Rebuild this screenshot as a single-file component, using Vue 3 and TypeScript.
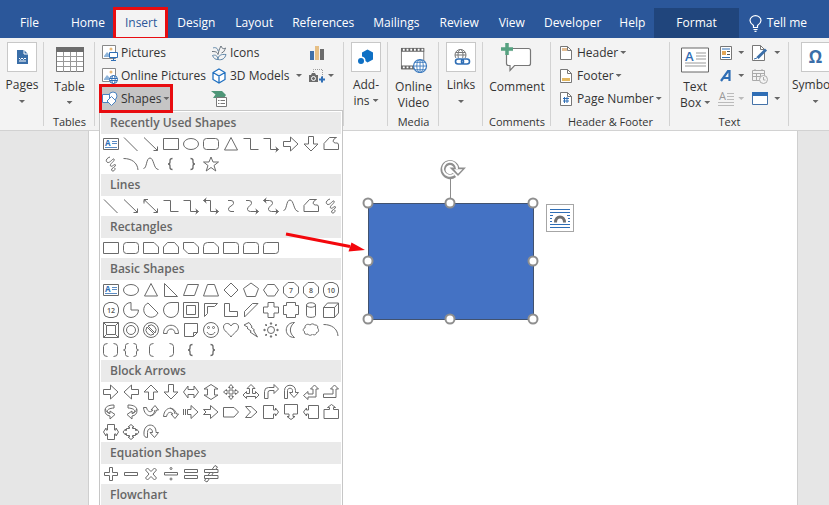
<script setup lang="ts">
interface Shape {
  name: string
  d: string
  text?: string
  box?: boolean
  bold?: boolean
}

interface Section {
  title: string
  shapes: Shape[]
}

const s = (name: string, d: string, extra: Partial<Shape> = {}): Shape => ({ name, d, ...extra })

const headEnd = 'M17.5 15.5l-3-2.5M17.5 15.5l-3 2.5M15.5 14v3'
const headStart = 'M2.5 4.5l3-2.5M2.5 4.5l3 2.5M4.5 3v3'

const textBox = s('Text Box', 'M2.5 4.5h15v11h-15z', { box: true })
const line = s('Line', 'M3 3.5L16.5 17')
const arrow = s('Line Arrow', 'M3 3.5L16.5 16.5M16.5 12.5v4h-4M14.5 16.5l2-2')
const doubleArrow = s('Double Arrow', 'M3 3.5L16.5 16.5M16.5 12.5v4h-4M3 7.5v-4h4M14.5 16.5l2-2M3 5.5l2-2')
const rect = s('Rectangle', 'M2.5 4.5h15v11h-15z')
const oval = s('Oval', 'M2.5 10a7.5 5.5 0 1 0 15 0a7.5 5.5 0 1 0 -15 0z')
const rounded = s('Rounded Rectangle', 'M5.5 4.5h9q3 0 3 3v5q0 3-3 3h-9q-3 0-3-3v-5q0-3 3-3z')
const triangle = s('Triangle', 'M10 3.5L16.5 16H3.5z')
const elbow = s('Elbow', 'M2.5 4.5h7v11h8')
const elbowArrow = s('Elbow Arrow', 'M2.5 4.5h7v11h8' + headEnd)
const elbowDouble = s('Elbow Double Arrow', 'M2.5 4.5h7v11h8' + headEnd + headStart)
const curveConn = s('Curved', 'M7 4.5h3q3 0 2.500 3q-.500 1.500-2.500 2.500q-3 1.500-2.500 3.500q.500 2 2.500 2h3')
const curveArrow = s('Curved Arrow', 'M5 4.500h3q3 0 2.500 3q-.500 1.500-2 2.500q-2.500 1.500-2 3.500q.500 2 3 2h8' + headEnd)
const curveDouble = s('Curved Double Arrow', 'M2.500 4.500h6q3.500 0 3 3q-.500 1.500-2 2.500q-2.500 1.500-2 3.500q.500 2 3 2h7' + headEnd + headStart)
const curve = s('Curve', 'M2.500 14.500C6 14.500 5 4 9 4s3.500 11.500 8.500 11.500')
const freeform = s('Freeform', 'M3 9.500L8.500 3.500h7c-4 1.500-5 6 .500 5.500q1.500 0 1.500 2v4.500H3z')
const scribble = s('Scribble', 'M9 3C5 4 4 8 7 8.500C9 9 12 4 13 5C14.500 7 8 10 9.500 12C11 13.500 14 9 14.500 11C15 13 10 14 10.500 16C11 18 14.500 17 14 14')
const arc = s('Arc', 'M2.500 4.500c8 0 14 4 14.500 11.500')
const leftBrace = s('Left Brace', 'M11.500 4.500q-2.500 0-2.500 2v1.500q0 2-2 2q2 0 2 2v1.500q0 2 2.500 2', { bold: true })
const rightBrace = s('Right Brace', 'M9.500 4.500q2.500 0 2.500 2v1.500q0 2 2 2q-2 0-2 2v1.500q0 2-2.500 2', { bold: true })
const star = s('Star', 'M10 3l2 5h5.500l-4.500 3.500l1.800 5.500l-4.800-3.500l-4.800 3.500l1.800-5.500l-4.500-3.500h5.500z')
const rightArrow = s('Right Arrow', 'M2.500 7.500h7v-4.500l7.500 7l-7.500 7v-4.500h-7z')
const downArrow = s('Down Arrow', 'M7.500 2.500h5v7.500h4.500l-7 7l-7-7h4.500z')

const octagon = 'M7 2.500h6l4.500 4.500v6l-4.500 4.500h-6l-4.500-4.500v-6z'
const dodecagon = 'M8 2.500h4l4 2l1.500 3.500v4l-1.500 4l-4 1.500h-4l-4-1.500l-1.500-4v-4l1.500-3.500z'

const sections: Section[] = [
  {
    title: 'Recently Used Shapes',
    shapes: [
      textBox, line, arrow, rect, oval, rounded, triangle, elbow, elbowArrow, rightArrow, downArrow, freeform,
      scribble, arc, curve, leftBrace, rightBrace, star,
    ],
  },
  {
    title: 'Lines',
    shapes: [line, arrow, doubleArrow, elbow, elbowArrow, elbowDouble, curveConn, curveArrow, curveDouble, curve, freeform, scribble],
  },
  {
    title: 'Rectangles',
    shapes: [
      rect,
      rounded,
      s('Snip Single Corner', 'M2.500 4.500h10.500l4.500 4.500v6.500h-15z'),
      s('Snip Same Side', 'M6.500 4.500h7l4 4.500v6.500h-15v-6.500z'),
      s('Snip Diagonal', 'M2.500 4.500h10.500l4.500 4.500v6.500h-10.500l-4.500-4.500z'),
      s('Snip and Round', 'M6.500 4.500h6.500l4.500 4.500v6.500h-15v-7q0-4 4-4z'),
      s('Round Single Corner', 'M2.500 4.500h12q3 0 3 3v8h-15z'),
      s('Round Same Side', 'M5.500 4.500h9q3 0 3 3v8h-15v-8q0-3 3-3z'),
      s('Round Diagonal', 'M5.500 4.500h12v8q0 3-3 3h-12v-8q0-3 3-3z'),
    ],
  },
  {
    title: 'Basic Shapes',
    shapes: [
      textBox,
      oval,
      triangle,
      s('Right Triangle', 'M3.500 3.500v13h13z'),
      s('Parallelogram', 'M6.500 4.500h11l-4 11h-11z'),
      s('Trapezoid', 'M6.500 4.500h7l4 11.500h-15z'),
      s('Diamond', 'M10 3l7 7l-7 7l-7-7z'),
      s('Pentagon', 'M10 3l7.500 5.500l-3 8h-9l-3-8z'),
      s('Hexagon', 'M6.500 4.500h7l4 5.500l-4 6h-7l-4-6z'),
      s('Heptagon', octagon, { text: '7' }),
      s('Octagon', octagon, { text: '8' }),
      s('Decagon', dodecagon, { text: '10' }),
      s('Dodecagon', dodecagon, { text: '12' }),
      s('Pie', 'M10 2.500a7.500 7.500 0 1 0 7.500 7.500h-7.500z'),
      s('Chord', 'M7 3a7.500 7.500 0 1 0 10 10z'),
      s('Teardrop', 'M17.500 2.500v7.500a7.500 7.500 0 1 1 -7.500-7.500z'),
      s('Frame', 'M2.500 2.500h15v15h-15zM5.500 5.500h9v9h-9z'),
      s('Half Frame', 'M3.500 3.500h13l-3 3h-7v7l-3 3z'),
      s('L-Shape', 'M3.500 3.500h5v8h8v5h-13z'),
      s('Diagonal Stripe', 'M11.500 3.500h5.500l-13.500 13.500v-5.500z'),
      s('Cross', 'M7 2.500h6v4.500h4.500v6h-4.500v4.500h-6v-4.500h-4.500v-6h4.500z'),
      s('Plaque', 'M5.500 2.500h9v3h3v9h-3v3h-9v-3h-3v-9h3z'),
      s('Can', 'M5.500 5c0-3 9-3 9 0v10.500c0 2.500-9 2.500-9 0zM5.500 5c0 3 9 3 9 0'),
      s('Cube', 'M2.500 7.500l4-4.500h11v10l-4 4.500h-11zM2.500 7.500h11v10M13.500 7.500l4-4.500'),
      s('Bevel', 'M2.500 2.500h15v15h-15zM5.500 5.500h9v9h-9zM2.500 2.500l3 3M17.500 2.500l-3 3M2.500 17.500l3-3M17.500 17.500l-3-3'),
      s('Donut', 'M2.500 10a7.500 7.500 0 1 0 15 0a7.500 7.500 0 1 0 -15 0zM5.500 10a4.500 4.500 0 1 0 9 0a4.500 4.500 0 1 0 -9 0z'),
      s('No Symbol', 'M2.500 10a7.500 7.500 0 1 0 15 0a7.500 7.500 0 1 0 -15 0zM7 6l7 7a5 5 0 0 0-7-7zM6 7l7 7a5 5 0 0 1-7-7z'),
      s('Block Arc', 'M2.500 13.500c0-11 15-11 15 0h-3.500c0-6-8-6-8 0z'),
      s('Folded Corner', 'M3.500 3.500h13v9l-4 4h-9zM12.500 16.500v-4h4'),
      s('Smiley Face', 'M2.500 10a7.500 7.500 0 1 0 15 0a7.500 7.500 0 1 0 -15 0zM6 12c1.500 3.500 6.500 3.500 8 0M6.500 7.500a1 1 0 1 0 2 0a1 1 0 1 0-2 0M11.500 7.500a1 1 0 1 0 2 0a1 1 0 1 0-2 0'),
      s('Heart', 'M10 6c2-4 7.500-3 7.500 1c0 4-5 6-7.500 10c-2.500-4-7.500-6-7.500-10c0-4 5.500-5 7.500-1z'),
      s('Lightning Bolt', 'M3 5l5-2.500l3 4l-1 .500l3.500 3l-1 .500l4 6.500l-7.500-5l1.200-.800l-4.200-3l1-.800z'),
      s('Sun', 'M6.500 10a3.500 3.500 0 1 0 7 0a3.500 3.500 0 1 0 -7 0zM9 4l1-1.500l1 1.500zM9 16l1 1.500l1-1.500zM4 9l-1.500 1l1.500 1zM16 9l1.500 1l-1.500 1zM4.500 4.500l1.500.500l-1 1zM15.500 4.500l-.500 1.500l-1-1zM4.500 15.500l.500-1.500l1 1zM15.500 15.500l-1.500-.500l1-1z'),
      s('Moon', 'M13.500 2.500c-11 0-11 15 0 15c-5.500-4-5.500-11 0-15z'),
      s('Cloud', 'M4 8c-.500-3.500 3-4.500 5-3c1.500-1.500 4-1.500 4.500 0c2.500-.500 4 1.500 3 3c2 2 1 4.500-1 4.500c0 2.500-3 3-4 1.500c-1.500 2-4 1.500-4.500 0c-2.500 1-4-.500-3.500-2.500c-2-.500-1.500-3.500.500-3.500z'),
      arc,
      s('Double Bracket', 'M6.500 3.500q-4 0-4 3v7q0 3 4 3M12.500 3.500q4 0 4 3v7q0 3-4 3'),
      s('Double Brace', 'M7.500 3.500q-3 0-3 2v2.500q0 2-2 2q2 0 2 2v2.500q0 2 3 2M12.500 3.500q3 0 3 2v2.500q0 2 2 2q-2 0-2 2v2.500q0 2-3 2'),
      s('Left Bracket', 'M12.500 3.500q-4 0-4 3v7q0 3 4 3'),
      s('Right Bracket', 'M8.500 3.500q4 0 4 3v7q0 3-4 3'),
      leftBrace,
      rightBrace,
    ],
  },
  {
    title: 'Block Arrows',
    shapes: [
      rightArrow,
      s('Left Arrow', 'M17.500 7.500h-7v-4.500l-7.500 7l7.500 7v-4.500h7z'),
      s('Up Arrow', 'M7.500 17.500h5v-7.500h4.500l-7-7l-7 7h4.500z'),
      downArrow,
      s('Left-Right Arrow', 'M2.500 10l4.500-6v3.500h6v-3.500l4.500 6l-4.500 6v-3.500h-6v3.500z'),
      s('Up-Down Arrow', 'M10 2.500l7 4.500h-3.500v6h3.500l-7 4.500l-7-4.500h3.500v-6h-3.500z'),
      s('Quad Arrow', 'M10 2.500l2.500 3h-1.500v3.500h3.500v-1.500l3 2.500l-3 2.500v-1.500h-3.500v3.500h1.500l-2.500 3l-2.500-3h1.500v-3.500h-3.500v1.500l-3-2.500l3-2.500v1.500h3.500v-3.500h-1.500z'),
      s('Left-Right-Up Arrow', 'M10 2.500l4 4h-2.500v5h3v-2l3.500 3.500l-3.500 3.500v-2h-9v2l-3.500-3.500l3.500-3.500v2h3v-5h-2.500z'),
      s('Bent Arrow', 'M3.500 16.500v-7q0-4 4-4h5.500v-3l4.500 4.500l-4.500 4.500v-3h-4q-2 0-2 2v6z'),
      s('U-Turn Arrow', 'M3.500 16.500v-8c0-7 11-7 11 0v2h3l-4.500 5l-4.500-5h3v-2c0-3-5-3-5 0v8z'),
      s('Left-Up Arrow', 'M13.500 3l4 4h-2.500v8h-8v2.500l-4.500-4l4.500-4v2.500h5v-5h-2.500z'),
      s('Bent-Up Arrow', 'M13.500 3l4 4h-2.500v8.500h-12.500v-3.500h9.500v-5h-2.500z'),
      s('Curved Right Arrow', 'M13 3c-6 0-9 2-9 5.500s2 5 5 5.500v3l5-4.500l-5-3.500v2.500c-4-1.500-4-5 4-5.500zM4.500 7c0 2 2 4 4.500 4.500'),
      s('Curved Left Arrow', 'M7 3c6 0 9 2 9 5.500s-2 5-5 5.500v3l-5-4.500l5-3.500v2.500c4-1.500 4-5-4-5.500zM15.500 7c0 2-2 4-4.500 4.500'),
      s('Curved Up Arrow', 'M2.500 5.500h3c1 5 5 5 6.500 2.500h-2l4-4.500l3.500 4.500h-2c-2 8-12 8-13-2.500zM9 14c3-1 4.500-3 5-6'),
      s('Curved Down Arrow', 'M2.500 14.500h3c1-5 5-5 6.500-2.500h-2l4 4.500l3.500-4.500h-2c-2-8-12-8-13 2.500zM9 6c3 1 4.500 3 5 6'),
      s('Striped Right Arrow', 'M2.500 7v6M4.500 7v6M6.500 7.500h3.500v-4l7 6.500l-7 6.500v-4h-3.500z'),
      s('Notched Right Arrow', 'M2.500 7.500h7v-4l7.500 6.500l-7.500 6.500v-4h-7l2.500-2.500z'),
      s('Pentagon Arrow', 'M2.500 5.500h10.500l4.500 4.500l-4.500 5h-10.500z'),
      s('Chevron', 'M4.500 4.500h5.500l6 5.500l-6 5.500h-5.500l5-5.500z'),
      s('Right Arrow Callout', 'M2.500 3.500h10v4.500h2v-2l3 4l-3 4v-2h-2v4.500h-10z'),
      s('Down Arrow Callout', 'M3.500 2.500h13v9.500h-4.500v2.500h2l-4 3l-4-3h2v-2.500h-4.500z'),
      s('Left Arrow Callout', 'M17.500 3.500h-10v4.500h-2v-2l-3 4l3 4v-2h2v4.500h10z'),
      s('Up Arrow Callout', 'M3 16.500h14.500v-9h-5v-2h2l-4-3l-4 3h2v2h-5.500z'),
      s('Left-Right Callout', 'M6.500 2.500h7v5.500h1.500v-2l2.500 4l-2.500 4v-2h-1.500v5.500h-7v-5.500h-1.500v2l-2.500-4l2.500-4v2h1.500z'),
      s('Quad Callout', 'M10 2.500l3 2.500h-1.500v1.500h3v2h1v-1.500l2.500 3l-2.500 3v-1.500h-1v2h-3v1.500h1.500l-3 2.500l-3-2.500h1.500v-1.500h-3v-2h-1v1.500l-2.500-3l2.500-3v1.500h1v-2h3v-1.500h-1.500z'),
      s('Circular Arrow', 'M3 12.500c-1-12 12-12 12-3v1h2.500l-4 5l-4.500-5h2.500c0-5-5-5-5 0v5c-2 0-3.500-1-3.500-3z'),
    ],
  },
  {
    title: 'Equation Shapes',
    shapes: [
      s('Plus', 'M8.500 3.500h3v5h5v3h-5v5h-3v-5h-5v-3h5z'),
      s('Minus', 'M3.500 8.500h13v3h-13z'),
      s('Multiply', 'M4.500 6l2-2l3.500 3.500l3.500-3.500l2 2l-3.500 4l3.500 4l-2 2l-3.500-3.500l-3.500 3.500l-2-2l3.500-4z'),
      s('Divide', 'M3.500 8.500h13v2.500h-13zM9 4.500a1 1 0 1 0 2 0a1 1 0 1 0-2 0M9 15a1 1 0 1 0 2 0a1 1 0 1 0-2 0'),
      s('Equal', 'M3.500 5.500h13v3h-13zM3.500 11.500h13v3h-13z'),
      s('Not Equal', 'M3.500 5.500h7.500l3-4l2.500 1.500l-2 2.500h2.500v3h-4.500l-2 3h6.500v3h-8.500l-2.500 3.500l-2.500-1.500l1.500-2h-1.500v-3h3.500l2-3h-5.500zM11 5.500h3.500M8.500 8.500h4M6.500 11.500h4M5 14.500h3.500'),
    ],
  },
  { title: 'Flowchart', shapes: [] },
]

const tabs = ['File', 'Home', 'Insert', 'Design', 'Layout', 'References', 'Mailings', 'Review', 'View', 'Developer', 'Help', 'Format']
const snug = ['References', 'Developer', 'Help']

const handles = [
  [8, 45], [90, 45], [173, 45],
  [8, 103], [173, 103],
  [8, 161], [90, 161], [173, 161],
]
</script>

<template>
  <div class="app">
    <nav class="tabs">
      <button
        v-for="tab in tabs"
        :key="tab"
        class="tab"
        :class="{ file: tab === 'File', active: tab === 'Insert', format: tab === 'Format', snug: snug.includes(tab) }"
      >{{ tab }}</button>
      <button class="tab tell">
        <svg width="13" height="17" viewBox="0 0 13 17" fill="none" stroke="#fff" stroke-width="1.2"><path d="M4.500 12.500v-2C2.500 9 1 8 1 5.500a5.500 4.800 0 0 1 11 0c0 2.500-1.500 3.500-3.500 5v2zM4.500 14.500h4M5.500 16.300h2" /></svg>
        Tell me
      </button>
    </nav>

    <main class="body">
      <div class="ribbon">
        <section class="group">
          <button class="big framed">
            <span class="frame"><svg width="20" height="20" viewBox="0 0 20 20"><path d="M5 3h7l4 4v10H5z" fill="#3a6ea8" /><path d="M12 3v4h4" fill="none" stroke="#fff" /><path d="M7 11l1.500 1.500L10 11l1.500 1.500L13 11l1 1M7 14h7" fill="none" stroke="#fff" /></svg></span>
            <span>Pages</span><i class="caret"></i>
          </button>
        </section>

        <section class="group">
          <button class="big">
            <svg width="28" height="26" viewBox="0 0 28 26"><path d="M.500.500h27v24H.500z" fill="#fff" stroke="#777" /><path d="M0 0h28v5H0z" fill="#6d6d6d" /><path d="M1 9.500h26M1 14.500h26M1 19.500h26M7.500 5v20M14.500 5v20M20.500 5v20" stroke="#999" /></svg>
            <span>Table</span><i class="caret"></i>
          </button>
          <h2>Tables</h2>
        </section>

        <section class="group illustrations">
          <div class="stack first">
            <button class="small">
              <svg width="16" height="16" viewBox="0 0 16 16"><path d="M.500.500h13v13H.500z" fill="#fff" stroke="#888" /><path d="M2 11l3-4 2 2v3H2z" fill="#8db3d9" /><circle cx="9" cy="4" r="1.500" fill="#e8b878" /><path d="M7.500 7.500h8v5h-8zM11.500 13v2.500M9 15.500h5" fill="#fff" stroke="#2f6eb5" /></svg>
              Pictures
            </button>
            <button class="small">
              <svg width="16" height="16" viewBox="0 0 16 16"><path d="M.500.500h13v13H.500z" fill="#fff" stroke="#888" /><path d="M2 11l3-4 2 2v3H2z" fill="#8db3d9" /><circle cx="9" cy="4" r="1.500" fill="#e8b878" /><circle cx="11.500" cy="11.500" r="4" fill="#fff" stroke="#2f6eb5" /><ellipse cx="11.500" cy="11.500" rx="1.700" ry="4" fill="none" stroke="#2f6eb5" /><path d="M7.500 10.500h8M7.500 12.500h8" stroke="#2f6eb5" /></svg>
              Online Pictures
            </button>
            <button class="small shapes">
              <svg width="16" height="16" viewBox="0 0 16 16" fill="#fff" stroke="#4a83c0"><circle cx="11" cy="5" r="4" /><path d="M.500 3.500h7v8h-7z" /><path d="M9.500 5.500l4.500 4.500-4.500 4.500L5 10z" /></svg>
              Shapes<i class="caret"></i>
            </button>
          </div>
          <div class="stack second">
            <button class="small">
              <svg width="16" height="16" viewBox="0 0 16 16" fill="none" stroke="#67727c"><path d="M1 6.500c3 0 5 0 6 3 1-4 1-5 3-8.500 1 3 3 3 4.500 2-1 2-1 4-4 5" /><path d="M2 3c2-1 5 0 5 3M7 14.500c-3 0-4-1-5.500-4 3-1 5 0 5.500 4zM7 14.500c0-4 3-5.500 8-5-1 4-4 6-8 5z" stroke="#5f86a8" /></svg>
              Icons
            </button>
            <button class="small">
              <svg width="16" height="16" viewBox="0 0 16 16" fill="#fff" stroke="#1e6fc0" stroke-width="1.300"><path d="M8 1l6 3.500v7L8 15l-6-3.500v-7zM2 4.500L8 8l6-3.500M8 8v7" /></svg>
              <span class="grow">3D Models</span><i class="caret"></i>
            </button>
            <button class="small" aria-label="SmartArt">
              <svg width="16" height="16" viewBox="0 0 16 16"><path d="M0 0h11l4 4-2 3H2l2.500-3.500z" fill="#4f9678" /><path d="M5.500 6.500h10v9h-10z" fill="#fff" stroke="#777" /><path d="M7 9.500h1.500M7 12.500h1.500M9.500 9.500H14M9.500 12.500H14" stroke="#777" /></svg>
            </button>
          </div>
          <div class="stack third">
            <button class="small" aria-label="Chart">
              <svg width="16" height="16" viewBox="0 0 16 16"><path d="M1 6h4v9H1z" fill="#3f6fa8" /><path d="M6 1h4v14H6z" fill="#e6bf85" /><path d="M11 4h4v11h-4z" fill="#6b6b6b" /></svg>
            </button>
            <button class="small" aria-label="Screenshot">
              <svg width="16" height="16" viewBox="0 0 16 16"><path d="M4.500 4v-2.500h9V9" fill="none" stroke="#999" stroke-dasharray="1 1" /><path d="M0 7h2l1-2h3l1 2h2v7H0z" fill="#6b6b6b" /><circle cx="4.500" cy="10.500" r="2" fill="#6b6b6b" stroke="#fff" /><path d="M13 8.500v6M10 11.500h6" stroke="#2f6eb5" stroke-width="2" /></svg>
              <i class="caret"></i>
            </button>
          </div>

          <div class="gallery">
            <template v-for="sec in sections" :key="sec.title">
              <h3>{{ sec.title }}</h3>
              <div class="grid">
                <button v-for="shape in sec.shapes" :key="shape.name" class="cell" :aria-label="shape.name">
                  <svg width="20" height="20" viewBox="0 0 20 20">
                    <path :d="shape.d" class="glyph" :class="{ bold: shape.bold }" />
                    <template v-if="shape.box">
                      <text x="4" y="12" class="mini-a">A</text>
                      <path d="M11 7.500h5M11 9.500h5M4 13.500h12" stroke="#5b8cc4" />
                    </template>
                    <text v-if="shape.text" x="10" y="13" text-anchor="middle" class="digits">{{ shape.text }}</text>
                  </svg>
                </button>
              </div>
            </template>
          </div>
        </section>

        <section class="group">
          <button class="big framed">
            <span class="frame"><svg width="20" height="20" viewBox="0 0 20 20" fill="#0f70c4"><path d="M11.500 2.500l5.500 3v7l-5.500 3-2-1.500a4 4 0 0 0-3.500-4.500V5.500z" /><circle cx="5" cy="14" r="3" /></svg></span>
            <span>Add-<br>ins<i class="caret inline"></i></span>
          </button>
        </section>

        <section class="group">
          <button class="big">
            <svg width="30" height="28" viewBox="0 0 30 28"><path d="M1.500 1.500h24v22h-24z" fill="#fff" stroke="#777" /><path d="M1 3h25M1 22h25" stroke="#666" stroke-width="4" /><path d="M3 3h22M3 22h22" stroke="#fff" stroke-width="2" stroke-dasharray="2 2" /><circle cx="21.500" cy="20.500" r="7" fill="#fff" stroke="#3f7cbf" stroke-width="1.300" /><path d="M21.500 13.500v14M14.500 20.500h14M16 16.500h11M16 24.500h11" stroke="#3f7cbf" /><ellipse cx="21.500" cy="20.500" rx="3.500" ry="7" fill="none" stroke="#3f7cbf" /></svg>
            <span>Online<br>Video</span>
          </button>
          <h2>Media</h2>
        </section>

        <section class="group">
          <button class="big framed">
            <span class="frame"><svg width="20" height="20" viewBox="0 0 20 20" fill="none"><circle cx="9.500" cy="8" r="5.500" stroke="#777" /><ellipse cx="9.500" cy="8" rx="2.500" ry="5.500" stroke="#777" /><path d="M4 8h11M5 5.500h9" stroke="#777" /><path d="M4 11h15v7H4z" fill="#fff" /><rect x="4.500" y="12" width="8" height="5" rx="2.500" stroke="#2f6eb5" stroke-width="1.600" /><rect x="10.500" y="12" width="8" height="5" rx="2.500" stroke="#2f6eb5" stroke-width="1.600" /></svg></span>
            <span>Links</span><i class="caret"></i>
          </button>
        </section>

        <section class="group">
          <button class="big">
            <svg class="bubble" width="32" height="30" viewBox="0 0 32 30"><path d="M5.500 5.500h22q2 0 2 2v13q0 2-2 2h-14l-4.500 5v-5h-1.500q-2 0-2-2z" fill="#fff" stroke="#777" stroke-width="1.200" /><path d="M6 0v12M0 6h12" stroke="#f3f3f3" stroke-width="5" /><path d="M6 0v12M0 6h12" stroke="#56a180" stroke-width="3.500" /></svg>
            <span>Comment</span>
          </button>
          <h2>Comments</h2>
        </section>

        <section class="group headers">
          <div class="stack">
            <button class="small">
              <svg width="12" height="14" viewBox="0 0 12 14"><path d="M.500.500h7l4 4v9H.500z" fill="#fff" stroke="#777" /><path d="M2 2h5v3H2z" fill="#e3bd93" /><path d="M7.500.500v4h4" fill="none" stroke="#777" /></svg>
              Header<i class="caret"></i>
            </button>
            <button class="small">
              <svg width="12" height="14" viewBox="0 0 12 14"><path d="M.500.500h7l4 4v9H.500z" fill="#fff" stroke="#777" /><path d="M2 9h8v3H2z" fill="#e3b75f" /><path d="M7.500.500v4h4" fill="none" stroke="#777" /></svg>
              Footer<i class="caret"></i>
            </button>
            <button class="small">
              <svg width="12" height="14" viewBox="0 0 12 14"><path d="M.500.500h7l4 4v9H.500z" fill="#fff" stroke="#777" /><path d="M7.500.500v4h4" fill="none" stroke="#777" /><path d="M4.500 5v6M7 5v6M3 6.500h6M3 9h6" stroke="#2f6eb5" /></svg>
              Page Number<i class="caret"></i>
            </button>
          </div>
          <h2>Header &amp; Footer</h2>
        </section>

        <section class="group textual">
          <div class="columns">
            <button class="big">
              <svg width="28" height="25" viewBox="0 0 28 25"><path d="M.500.500h27v24H.500z" fill="#fff" stroke="#666" /><text x="4" y="13" class="big-a">A</text><path d="M15 5.500h10M15 8.500h10M15 11.500h10M4 15.500h21M4 18.500h21" stroke="#999" /></svg>
              <span>Text<br>Box<i class="caret inline"></i></span>
            </button>
            <div class="stack">
              <button class="small" aria-label="Quick Parts">
                <svg width="12" height="14" viewBox="0 0 12 14"><path d="M.500.500h11v13H.500z" fill="#fff" stroke="#777" /><path d="M2 3h8M2 11.500h8" stroke="#2f6eb5" /><path d="M2 5h4v4H2z" fill="#e3a758" /><path d="M7 5.500h3M7 8.500h3" stroke="#555" /></svg>
                <i class="caret"></i>
              </button>
              <button class="small" aria-label="WordArt">
                <svg width="12" height="14" viewBox="0 0 12 14"><path d="M1 12L8 2h1.500v10M3.500 9h6" fill="none" stroke="#2f6eb5" stroke-width="2.200" /></svg>
                <i class="caret"></i>
              </button>
              <button class="small faded" aria-label="Drop Cap">
                <svg width="16" height="18" viewBox="0 0 16 18"><text x="1" y="10" class="cap-a">A</text><path d="M9 3.500h7M9 6.500h7M9 9.500h7M0 12.500h16M0 15.500h16" stroke="#bbb" /></svg>
                <i class="caret"></i>
              </button>
            </div>
            <div class="stack wide">
              <button class="small" aria-label="Signature Line">
                <svg width="16" height="16" viewBox="0 0 16 16"><path d="M.500.500h8l4 4v11H.500z" fill="#fff" stroke="#777" /><path d="M8.500.500v4h4" fill="none" stroke="#777" /><path d="M5.500 13L14 4.500" stroke="#3a6ea8" stroke-width="3" /><path d="M2 14l3-1" stroke="#3a6ea8" /></svg>
                <i class="caret"></i>
              </button>
              <button class="small" aria-label="Date and Time">
                <svg width="16" height="16" viewBox="0 0 16 16" fill="#f3f3f3" stroke="#aaa"><path d="M.500 2.500h12v10H.500zM.500 5.500h12M4.500 5v7M8.500 5v7M.500 8.500h12M3 1v2M10 1v2" /><circle cx="11.500" cy="11.500" r="4" /><path d="M11.500 9v3h2" fill="none" /></svg>
              </button>
              <button class="small" aria-label="Object">
                <svg width="16" height="14" viewBox="0 0 16 14"><path d="M.500.500h15v12H.500z" fill="#fff" stroke="#4472a8" /><path d="M0 0h16v4H0z" fill="#2f6eb5" /></svg>
                <i class="caret"></i>
              </button>
            </div>
          </div>
          <h2>Text</h2>
        </section>

        <section class="group symbols">
          <button class="big framed">
            <span class="frame omega">Ω</span>
            <span>Symbols</span><i class="caret"></i>
          </button>
        </section>
      </div>

      <div class="workspace">
        <div class="page">
          <svg class="drawing" width="182" height="170" viewBox="0 0 182 170">
            <path d="M90.500 20v20" stroke="#8c8c8c" />
            <path d="M8.500 45.500h165v116h-165z" fill="#4472c4" stroke="#41526f" />
            <path d="M97 11A7 7 0 1 0 94.500 17" fill="none" stroke="#8f8f8f" stroke-width="5" />
            <path d="M89.500 9.500h16.500l-8 8.500z" fill="#8f8f8f" />
            <path d="M97 11A7 7 0 1 0 94 16.500" fill="none" stroke="#fff" stroke-width="2" />
            <path d="M94 11.200h8.500l-4.500 4.500z" fill="#fff" />
            <circle v-for="(h, i) in handles" :key="i" :cx="h[0]" :cy="h[1]" r="4.500" fill="#fff" stroke="#8f8f8f" stroke-width="2" />
          </svg>
          <button class="layout-options" aria-label="Layout Options">
            <svg width="22" height="22" viewBox="0 0 22 22"><path d="M1 2.500h20M1 5.500h20M1 8.500h3M18 8.500h3M1 11.500h2M19 11.500h2M1 14.500h2M19 14.500h2M1 17.500h20M1 20.500h20" stroke="#2f6eb5" /><path d="M6.500 15.500c0-7.500 9-7.500 9 0" fill="none" stroke="#6f6f6f" stroke-width="3" /></svg>
          </button>
        </div>
      </div>

      <svg class="pointer" width="80" height="24" viewBox="0 0 80 24">
        <path d="M1 4l64 12.500" stroke="#f3070c" stroke-width="3" />
        <path d="M80 20L63.500 21.500l3-9z" fill="#f3070c" />
      </svg>
    </main>
  </div>
</template>

<style>
body {
  margin: 0;
}
</style>

<style scoped>
* {
  box-sizing: border-box;
}

.app {
  display: flex;
  flex-direction: column;
  height: 100vh;
  overflow: hidden;
  font-family: "Open Sans", "Noto Sans", sans-serif;
  font-size: 12px;
  line-height: 16px;
  color: #333;
}

button {
  border: 0;
  padding: 0;
  background: none;
  font: inherit;
  color: inherit;
}

svg {
  display: block;
  flex: none;
}

.tabs {
  display: flex;
  flex: none;
  padding-top: 8px;
  background: #2b579a;
}

.tab {
  display: flex;
  align-items: center;
  height: 30px;
  padding: 0 10px;
  color: #fff;
  white-space: nowrap;
}

.snug {
  padding: 0 9px;
}

.file {
  padding: 0 22px 0 20px;
}

.active {
  position: relative;
  background: #f3f3f3;
  color: #2b579a;
}

.active::after,
.shapes::after {
  content: "";
  position: absolute;
  inset: -1px -1px -2px -2px;
  border: 3px solid #e80c10;
}

.format {
  padding: 0 22px;
  background: #20457c;
}

.tell {
  gap: 5px;
}

.body {
  position: relative;
  flex: 1;
  display: flex;
  flex-direction: column;
}

.ribbon {
  display: grid;
  grid-template-columns: 44px 51px 249px 44px 51px 44px 68px 119px 119px 1fr;
  height: 93px;
  background: #f3f3f3;
  border-bottom: 1px solid #d2d2d2;
}

.group {
  position: relative;
  display: flex;
  flex-direction: column;
  justify-content: space-between;
  min-width: 0;
  padding: 4px 0 0;
}

.group:not(:last-child)::before {
  content: "";
  position: absolute;
  right: 0;
  top: 4px;
  bottom: 4px;
  border-right: 1px solid #d2d2d2;
}

h2 {
  margin: 0;
  font-size: 11px;
  font-weight: 400;
  line-height: 16px;
  text-align: center;
  white-space: nowrap;
}

.big {
  display: flex;
  flex-direction: column;
  align-items: center;
  gap: 6px;
  padding-top: 5px;
  white-space: nowrap;
}

.big > svg {
  height: 26px;
}

.big > .bubble {
  height: 30px;
  margin-top: -4px;
}

.big.framed {
  gap: 5px;
  padding-top: 0;
}

.frame {
  display: flex;
  align-items: center;
  justify-content: center;
  width: 30px;
  height: 30px;
  background: #fff;
  border: 1px solid #c8c8c8;
}

.omega {
  font-size: 17px;
  font-weight: 700;
  color: #3a6ea8;
}

.caret {
  flex: none;
  width: 6px;
  height: 3px;
  background: #666;
  clip-path: polygon(0 0, 100% 0, 50% 100%);
}

.framed > .caret {
  margin-top: 2px;
}

.caret.inline {
  display: inline-block;
  margin-left: 3px;
  vertical-align: 3px;
}

.illustrations {
  flex-direction: row;
  justify-content: flex-start;
  gap: 7px;
  padding-left: 7px;
}

.stack {
  display: flex;
  flex-direction: column;
  flex: none;
  margin-top: -1px;
}

.small {
  display: flex;
  align-items: center;
  gap: 3px;
  height: 23px;
  white-space: nowrap;
}

.first {
  width: 102px;
}

.second {
  width: 91px;
}

.grow {
  flex: 1;
  text-align: left;
}

.shapes {
  position: relative;
  z-index: 3;
  align-self: flex-start;
  height: 27px;
  margin: -2px 0;
  padding-right: 3px;
  background: #c5c5c5;
}

.shapes::after {
  inset: -1px -1px -1px -3px;
}

.shapes .caret {
  margin-left: -1px;
}

.gallery {
  position: absolute;
  z-index: 2;
  top: 72px;
  left: 4px;
  width: 244px;
  padding: 1px;
  background: #fff;
  border: 1px solid #c6c6c6;
}

h3 {
  margin: 0;
  padding-left: 9px;
  background: #eaeaea;
  font-size: 12px;
  font-weight: 600;
  line-height: 22px;
  color: #666;
}

.grid {
  display: grid;
  grid-template-columns: repeat(12, 20px);
  grid-auto-rows: 20px;
}

.glyph {
  fill: #fff;
  fill-rule: evenodd;
  stroke: #6a6a6a;
  stroke-width: 1;
}

.glyph:not([d*="z"]) {
  fill: none;
}

.glyph.bold {
  stroke-width: 1.3;
}

.mini-a {
  font-size: 8px;
  font-weight: 700;
  fill: #2f6eb5;
}

.digits {
  font-size: 7px;
  font-weight: 600;
  fill: #555;
}

.big-a {
  font-size: 13px;
  font-weight: 600;
  fill: #2f6eb5;
}

.cap-a {
  font-size: 11px;
  fill: #999;
}

.headers .small {
  gap: 5px;
  padding-left: 9px;
}

.headers .caret {
  margin-left: -3px;
}

.columns {
  display: flex;
  gap: 10px;
  padding-left: 10px;
}

.textual .small {
  justify-content: space-between;
  width: 24px;
}

.textual .wide .small {
  width: 28px;
}

.textual .faded {
  align-self: flex-end;
  width: 26px;
}

.textual .columns .stack:nth-child(2) {
  width: 24px;
}

.textual .wide {
  margin-left: -2px;
}

.faded .caret {
  background: #bbb;
}

.symbols {
  align-items: flex-start;
  padding-left: 3px;
  overflow: hidden;
}

.workspace {
  flex: 1;
  display: flex;
  padding: 0 31px 0 88px;
  background: #e6e6e6;
}

.page {
  position: relative;
  flex: 1;
  background: #fff;
  border: 1px solid #cfcfcf;
  border-width: 0 1px;
}

.drawing {
  position: absolute;
  left: 271px;
  top: 27px;
}

.layout-options {
  position: absolute;
  left: 457px;
  top: 73px;
  display: grid;
  place-items: center;
  width: 28px;
  height: 28px;
  background: #fff;
  border: 1px solid #a6a6a6;
}

.pointer {
  position: absolute;
  z-index: 4;
  left: 285px;
  top: 192px;
}
</style>
